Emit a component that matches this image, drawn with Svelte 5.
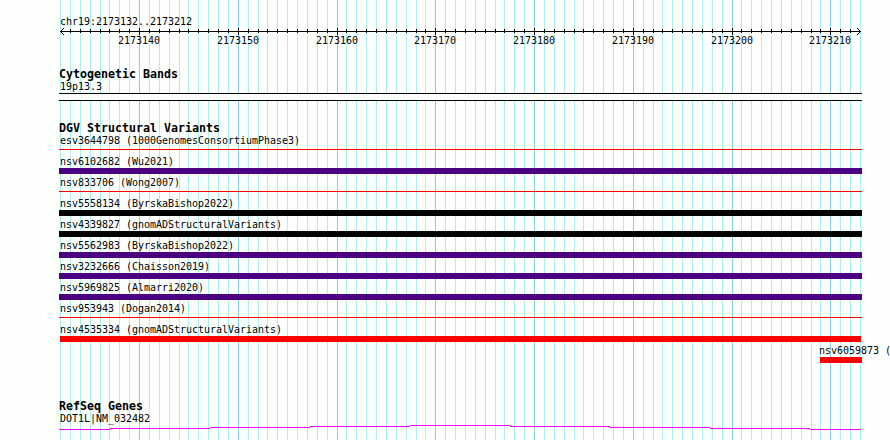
<script lang="ts">
    interface Variant {
        label: string;
        kind: 'line' | 'gain' | 'complex' | 'loss';
        start: number;
        end: number;
    }

    const scale = 800 / 81;
    const grid = Array.from({ length: 82 }, (_, i) => ({
        x: Math.round(60 + i * scale),
        major: i % 10 === 8,
        pos: 2173132 + i,
    }));
    const majors = grid.filter((g) => g.major);
    const ticks = grid.slice(1, -1);

    const variants: Variant[] = [
        { label: 'esv3644798 (1000GenomesConsortiumPhase3)', kind: 'line', start: 59, end: 862 },
        { label: 'nsv6102682 (Wu2021)', kind: 'complex', start: 59, end: 862 },
        { label: 'nsv833706 (Wong2007)', kind: 'line', start: 59, end: 862 },
        { label: 'nsv5558134 (ByrskaBishop2022)', kind: 'gain', start: 59, end: 862 },
        { label: 'nsv4339827 (gnomADStructuralVariants)', kind: 'gain', start: 59, end: 862 },
        { label: 'nsv5562983 (ByrskaBishop2022)', kind: 'complex', start: 59, end: 862 },
        { label: 'nsv3232666 (Chaisson2019)', kind: 'complex', start: 59, end: 862 },
        { label: 'nsv5969825 (Almarri2020)', kind: 'complex', start: 59, end: 862 },
        { label: 'nsv953943 (Dogan2014)', kind: 'line', start: 59, end: 862 },
        { label: 'nsv4535334 (gnomADStructuralVariants)', kind: 'loss', start: 60, end: 861 },
        { label: 'nsv6059873 (', kind: 'loss', start: 820, end: 862 },
    ];
</script>

<main class="browser">
    <svg class="grid" width="890" height="440" shape-rendering="crispEdges">
        {#each grid as g}
            <rect class:major={g.major} x={g.x} y="0" width="1" height="440" />
        {/each}
    </svg>

    <section class="ruler">
        <div class="label">chr19:2173132..2173212</div>
        <svg class="axis" width="890" height="7" shape-rendering="crispEdges">
            <rect x="60" y="3" width="801" height="1" />
            {#each ticks as g}
                <rect x={g.x} y={g.major ? 0 : 1} width="1" height={g.major ? 7 : 4} />
            {/each}
            <path d="M61 2h1v-1h1v-1h1v1h-1v1h-1v1h-1zM61 4h1v1h1v1h1v1h-1v-1h-1v-1h-1z" />
            <path d="M860 2h-1v-1h-1v-1h-1v1h1v1h1v1h1zM860 4h-1v1h-1v1h-1v1h1v-1h1v-1h1z" />
        </svg>
        <svg class="numbers" width="890" height="12">
            {#each majors as g}
                <text x={g.x - 21} y="9">{g.pos}</text>
            {/each}
        </svg>
    </section>

    <section class="bands">
        <h2>Cytogenetic Bands</h2>
        <div class="label">19p13.3</div>
        <div class="band"></div>
    </section>

    <section class="variants">
        <h2>DGV Structural Variants</h2>
        {#each variants as v}
            <div class="variant">
                <div class="label" style="margin-left: {v.start > 60 ? v.start - 1 : 60}px">{v.label}</div>
                <div class="bar {v.kind}" style="margin-left: {v.start}px; width: {v.end - v.start}px"></div>
            </div>
        {/each}
    </section>

    <section class="genes">
        <h2>RefSeq Genes</h2>
        <div class="label">DOT1L|NM_032482</div>
        <svg class="gene" width="890" height="5" shape-rendering="crispEdges">
            <path d="M59 4.5H110M110 3.5H210M210 2.5H310M310 1.5H410M410 .5H510M510 1.5H610M610 2.5H710M710 3.5H810M810 4.5H861" />
        </svg>
    </section>
</main>

<style>
    :global(body) {
        margin: 0;
        background: #fdfffd;
    }

    .browser {
        position: relative;
        width: 890px;
        height: 440px;
        overflow: hidden;
        color: #000;
        font: 10px/12px "DejaVu Sans Mono", monospace;
    }

    /* the grid runs behind every track */
    .grid {
        position: absolute;
        inset: 0;
        fill: #afeeee;
    }

    .grid .major {
        fill: #87ceeb;
    }

    section {
        position: relative;
    }

    svg {
        display: block;
    }

    h2 {
        height: 12px;
        margin: 0 0 0 59px;
        font: bold 11.63px/12px "DejaVu Sans Mono", monospace;
        white-space: pre;
    }

    .label {
        height: 12px;
        margin-left: 60px;
        line-height: 14px;
        letter-spacing: -0.02px;
        white-space: pre;
    }

    .ruler {
        height: 53px;
        padding-top: 15px;
    }

    .axis {
        margin-top: 1px;
    }

    .numbers text {
        letter-spacing: -0.02px;
    }

    .bands {
        height: 54px;
    }

    .band {
        box-sizing: border-box;
        width: 803px;
        height: 8px;
        margin: 1px 0 0 59px;
        border: solid #000;
        border-width: 1px 0;
        background: #fdfffd;
    }

    .variants {
        height: 278px;
    }

    .variant {
        display: flex;
        flex-direction: column;
        height: 21px;
    }

    .bar {
        height: 6px;
        margin-top: 1px;
    }

    .line {
        height: 1px;
        margin-top: 3px;
        background: #f00;
    }

    .complex {
        background: #4b0082;
    }

    .gain {
        background: #000;
    }

    .loss {
        background: #f00;
    }

    .gene {
        margin-top: 1px;
        fill: none;
        stroke: #f0f;
    }
</style>
